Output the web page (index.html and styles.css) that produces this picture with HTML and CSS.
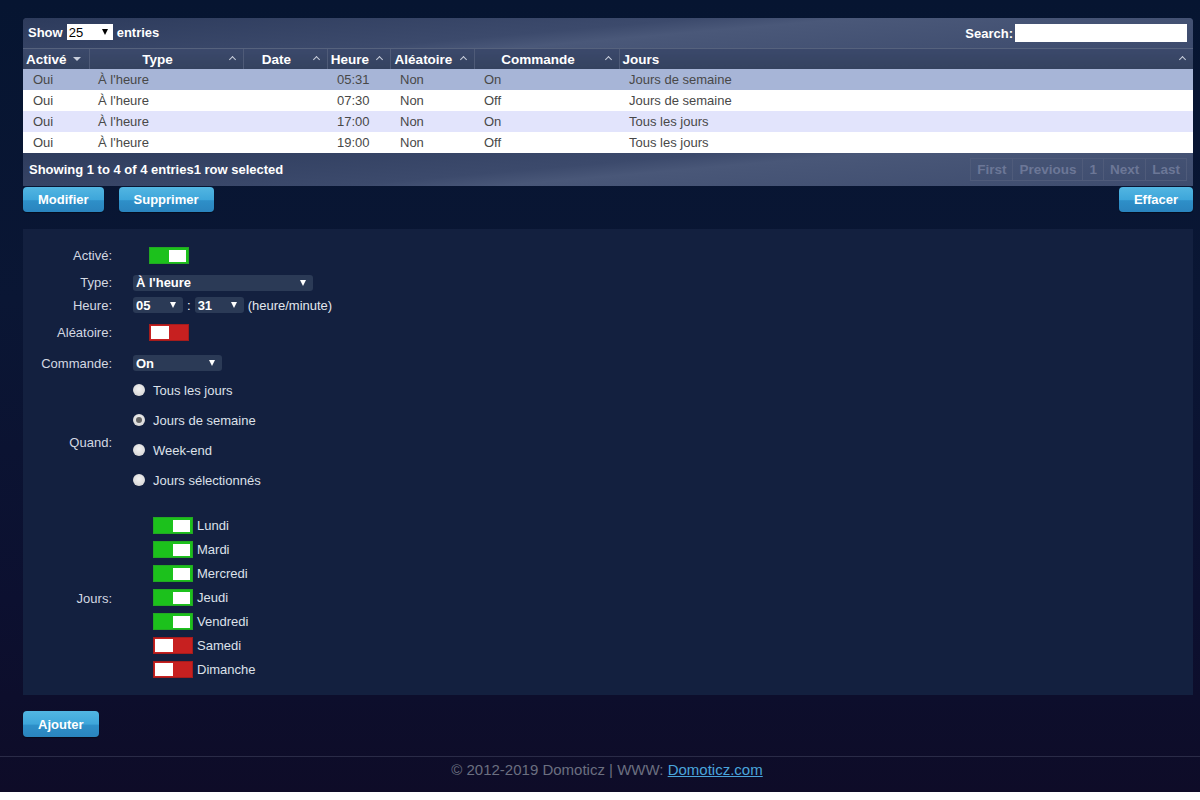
FILE: index.html
```html
<!DOCTYPE html>
<html lang="fr">
<head>
    <meta charset="UTF-8">
    <meta name="viewport" content="width=device-width, initial-scale=1.0">
    <title>Minuteries</title>
    <link rel="stylesheet" href="styles.css">
</head>
<body>
<div class="page">

    <div class="dt-wrapper">
        <div class="dt-toolbar">
            <div class="dt-length">
                Show
                <span class="dt-select"><select><option>25</option></select></span>
                entries
            </div>
            <div class="dt-filter">
                Search:<input type="text">
            </div>
        </div>
        <table class="dt">
            <colgroup>
                <col style="width:66px">
                <col style="width:154px">
                <col style="width:84px">
                <col style="width:63px">
                <col style="width:84px">
                <col style="width:145px">
                <col>
            </colgroup>
            <thead>
                <tr>
                    <th class="left sorted">Activé</th>
                    <th>Type</th>
                    <th>Date</th>
                    <th>Heure</th>
                    <th>Aléatoire</th>
                    <th>Commande</th>
                    <th class="left">Jours</th>
                </tr>
            </thead>
            <tbody>
                <tr class="selected">
                    <td>Oui</td><td>À l'heure</td><td></td><td>05:31</td><td>Non</td><td>On</td><td>Jours de semaine</td>
                </tr>
                <tr class="even">
                    <td>Oui</td><td>À l'heure</td><td></td><td>07:30</td><td>Non</td><td>Off</td><td>Jours de semaine</td>
                </tr>
                <tr class="odd">
                    <td>Oui</td><td>À l'heure</td><td></td><td>17:00</td><td>Non</td><td>On</td><td>Tous les jours</td>
                </tr>
                <tr class="even">
                    <td>Oui</td><td>À l'heure</td><td></td><td>19:00</td><td>Non</td><td>Off</td><td>Tous les jours</td>
                </tr>
            </tbody>
        </table>
        <div class="dt-footer">
            <div class="dt-info">Showing 1 to 4 of 4 entries1 row selected</div>
            <div class="dt-paging">
                <span>First</span><span>Previous</span><span class="num">1</span><span>Next</span><span>Last</span>
            </div>
        </div>
    </div>

    <div class="actions">
        <div class="btn-group">
            <button class="btn">Modifier</button>
            <button class="btn">Supprimer</button>
        </div>
        <button class="btn">Effacer</button>
    </div>

    <div class="timer-form">
        <div class="flabel">Activé:</div>
        <div class="fval h28"><span class="toggle on"></span></div>

        <div class="flabel">Type:</div>
        <div class="fval h27"><span class="sel w180"><select><option>À l'heure</option></select></span></div>

        <div class="flabel">Heure:</div>
        <div class="fval h18">
            <span class="sel w50"><select><option>05</option></select></span>
            <span class="colon">:</span>
            <span class="sel w49"><select><option>31</option></select></span>
            <span class="hint">(heure/minute)</span>
        </div>

        <div class="flabel">Aléatoire:</div>
        <div class="fval h37"><span class="toggle off"></span></div>

        <div class="flabel">Commande:</div>
        <div class="fval h24"><span class="sel w89"><select><option>On</option></select></span></div>

        <div class="flabel">Quand:</div>
        <div class="fval radios">
            <label class="radio"><span class="dot"></span>Tous les jours</label>
            <label class="radio"><span class="dot checked"></span>Jours de semaine</label>
            <label class="radio"><span class="dot"></span>Week-end</label>
            <label class="radio"><span class="dot"></span>Jours sélectionnés</label>
        </div>

        <div class="flabel">Jours:</div>
        <div class="fval days">
            <div class="day"><span class="toggle on"></span>Lundi</div>
            <div class="day"><span class="toggle on"></span>Mardi</div>
            <div class="day"><span class="toggle on"></span>Mercredi</div>
            <div class="day"><span class="toggle on"></span>Jeudi</div>
            <div class="day"><span class="toggle on"></span>Vendredi</div>
            <div class="day"><span class="toggle off"></span>Samedi</div>
            <div class="day"><span class="toggle off"></span>Dimanche</div>
        </div>
    </div>

    <div class="add-row">
        <button class="btn">Ajouter</button>
    </div>

    <div class="copyright">
        © 2012-2019 Domoticz | WWW: <a href="#">Domoticz.com</a>
    </div>
</div>
</body>
</html>
```

FILE: styles.css
```css
html, body{
    margin: 0;
    background: #fff;
}
body{
    font-family: "Liberation Sans", Arial, sans-serif;
    font-size: 13px;
}
.page{
    height: 792px;
    background: linear-gradient(180deg, #061531 0px, #0a1634 300px, #0c1030 600px, #0e0c28 792px);
    padding: 18px 7px 0 23px;
    box-sizing: border-box;
}

/* datatable */
.dt-wrapper{
    border-radius: 4px 4px 0 0;
    overflow: hidden;
    background: #34425f;
}
.dt-toolbar{
    height: 31px;
    box-sizing: border-box;
    display: flex;
    justify-content: space-between;
    align-items: flex-start;
    padding: 6px 6px 0 5px;
    color: #fff;
    font-weight: bold;
    background: linear-gradient(175deg, #2d3b5c 0%, #3c4a6c 45%, #4a5879 55%, #3d4b6d 100%);
    border-bottom: 1px solid #56627d;
}
.dt-length{
    display: flex;
    align-items: center;
    gap: 4px;
    height: 16px;
}
.dt-select{
    position: relative;
    display: inline-block;
}
.dt-select select{
    appearance: none;
    display: block;
    width: 46px;
    height: 16px;
    border: none;
    background: #fff;
    font-family: inherit;
    font-size: 13px;
    padding: 0 0 0 2px;
    color: #000;
    border-radius: 0;
}
.dt-select::after{
    content: "";
    position: absolute;
    right: 5px;
    top: 5px;
    border-left: 3px solid transparent;
    border-right: 3px solid transparent;
    border-top: 6px solid #000;
}
.dt-filter{
    display: flex;
    align-items: center;
    gap: 2px;
    height: 18px;
}
.dt-filter input{
    width: 172px;
    height: 18px;
    border: none;
    box-sizing: border-box;
    padding: 0;
}

table.dt{
    width: 100%;
    border-collapse: collapse;
    table-layout: fixed;
}
table.dt th{
    height: 20px;
    padding: 0 20px 0 3px;
    background: linear-gradient(#3b496b, #34425f);
    color: #fff;
    font-weight: bold;
    font-size: 13.5px;
    text-align: center;
    position: relative;
    border-right: 1px solid #4f5b78;
    box-sizing: border-box;
}
table.dt th:last-child{
    border-right: none;
}
table.dt th.left{
    text-align: left;
}
table.dt th::after{
    content: "";
    position: absolute;
    right: 8px;
    top: 8px;
    width: 4px;
    height: 4px;
    border-left: 1.5px solid #c9cfdc;
    border-top: 1.5px solid #c9cfdc;
    transform: rotate(45deg);
}
table.dt th.sorted::after{
    width: 0;
    height: 0;
    border-left: 4px solid transparent;
    border-right: 4px solid transparent;
    border-top: 4px solid #c9cfdc;
    transform: none;
    top: 8px;
}
table.dt td{
    height: 21px;
    padding: 0 0 0 10px;
    color: #484848;
    white-space: nowrap;
}
table.dt td:nth-child(2){
    padding-left: 9px;
}
table.dt tr.selected td{
    background: #a7b5d7;
}
table.dt tr.odd td{
    background: #e2e4fc;
}
table.dt tr.even td{
    background: #fff;
}

.dt-footer{
    height: 33px;
    display: flex;
    justify-content: space-between;
    align-items: center;
    padding: 0 6px;
    color: #fff;
    font-weight: bold;
    background: linear-gradient(175deg, #2e3c5d 0%, #3c4a6c 45%, #495778 55%, #3e4c6e 100%);
}
.dt-paging{
    display: flex;
    color: #6c7797;
    font-size: 13.5px;
}
.dt-paging span{
    padding: 3px 6px;
    border: 1px solid #4f5b7a;
    border-right: none;
}
.dt-paging span:last-child{
    border-right: 1px solid #4f5b7a;
}

/* buttons */
.actions{
    display: flex;
    justify-content: space-between;
    margin: 1px 0 17px;
}
.btn-group{
    display: flex;
    gap: 15px;
}
.btn{
    height: 25px;
    padding: 0 15px;
    border: none;
    border-radius: 4px;
    color: #fff;
    font-family: inherit;
    font-weight: bold;
    font-size: 13px;
    background: linear-gradient(#52b6e2 0%, #3ea6da 50%, #2e8fc8 55%, #2a84be 100%);
    box-shadow: 0 1px 1px rgba(0,0,0,.4);
}

/* form */
.timer-form{
    background: #13203f;
    padding: 12px 0 8px 0;
    display: grid;
    grid-template-columns: 89px 1fr;
    column-gap: 21px;
    color: #d3d8e2;
}
.flabel{
    text-align: right;
    align-self: center;
}
.fval{
    display: flex;
    align-items: center;
}
.h27{ height: 27px; }
.h28{ height: 28px; }
.h18{ height: 18px; }
.h37{ height: 37px; }
.h24{ height: 24px; }

.toggle{
    display: inline-block;
    width: 40px;
    height: 17px;
    box-sizing: border-box;
    position: relative;
}
.fval > .toggle{
    margin-left: 16px;
}
.toggle::after{
    content: "";
    position: absolute;
    top: 2px;
    width: 17px;
    height: 12px;
    background: #fff;
}
.toggle.on{
    background: #1cc11c;
    border: 1px solid #22a922;
}
.toggle.on::after{
    right: 2px;
}
.toggle.off{
    background: #c72020;
    border: 1px solid #a51c1c;
}
.toggle.off::after{
    left: 1px;
    top: 1px;
    width: 18px;
    height: 13px;
}

.sel{
    position: relative;
    display: inline-block;
}
.sel select{
    appearance: none;
    height: 16px;
    border: none;
    border-radius: 3px;
    background: #2b3a56;
    color: #fff;
    font-family: inherit;
    font-weight: bold;
    font-size: 13px;
    padding: 0 0 0 3px;
    width: 100%;
    display: block;
}
.sel::after{
    content: "";
    position: absolute;
    right: 7px;
    top: 5px;
    border-left: 3px solid transparent;
    border-right: 3px solid transparent;
    border-top: 6px solid #fff;
}
.w180{ width: 180px; }
.w50{ width: 50px; }
.w49{ width: 49px; }
.w89{ width: 89px; }
.colon{
    margin: 0 4px;
    color: #fff;
}
.hint{
    margin-left: 4px;
    color: #e2e6ee;
}

.radios{
    flex-direction: column;
    align-items: flex-start;
    padding-bottom: 14px;
}
.radio{
    height: 30px;
    display: flex;
    align-items: center;
    color: #dde1ea;
}
.dot{
    width: 12px;
    height: 12px;
    border-radius: 50%;
    background: radial-gradient(circle at 50% 40%, #f2f2f2, #cfcfcf);
    margin: 0 8px 0 0;
    position: relative;
}
.dot.checked::after{
    content: "";
    position: absolute;
    left: 3px;
    top: 3px;
    width: 6px;
    height: 6px;
    border-radius: 50%;
    background: #666;
}

.days{
    flex-direction: column;
    align-items: flex-start;
    padding: 8px 0 9px 20px;
    gap: 7px;
}
.day{
    display: flex;
    align-items: center;
    gap: 4px;
    height: 17px;
    color: #dde1ea;
}

.add-row{
    padding-top: 16px;
    height: 45px;
}
.add-row .btn{
    height: 26px;
}

.copyright{
    margin: 0 -7px 0 -23px;
    border-top: 1px solid #2a2b47;
    text-align: center;
    padding: 4px 0 0 14px;
    color: #6b6f80;
    font-size: 15px;
}
.copyright a{
    color: #4aa5dc;
}
```
